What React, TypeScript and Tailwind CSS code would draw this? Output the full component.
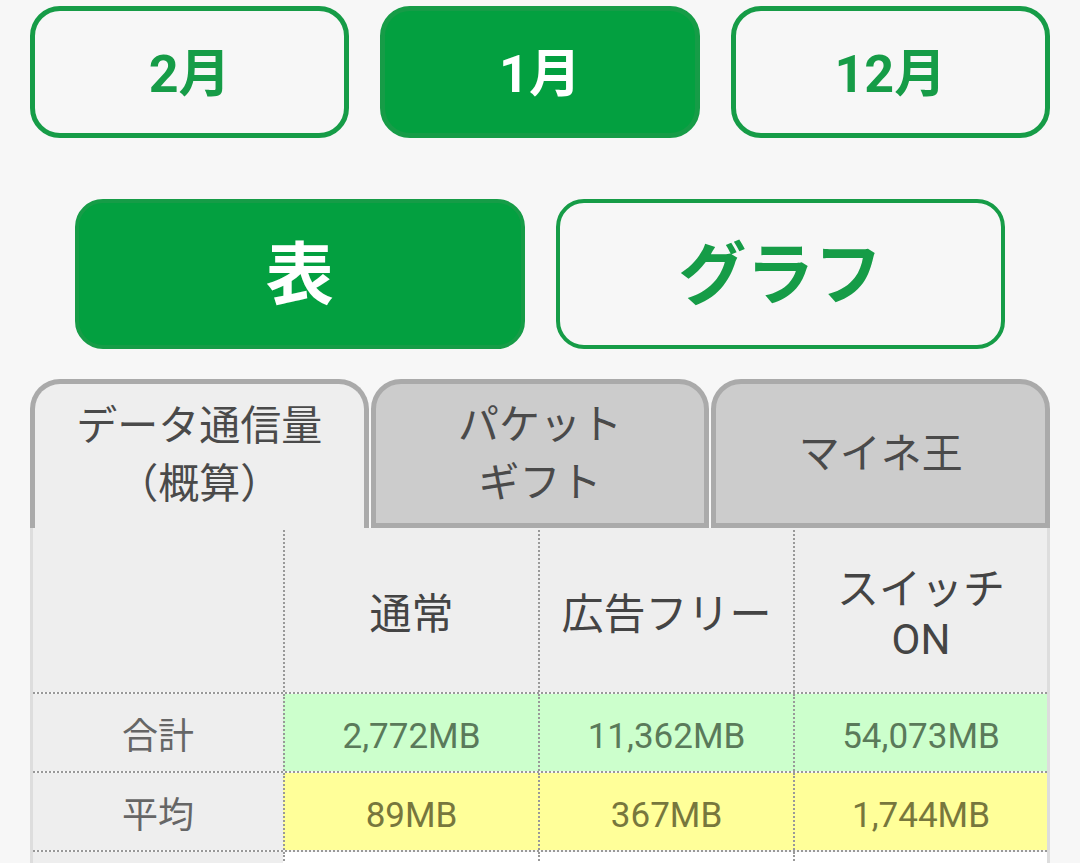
import React from "react";

const FONT = { fontFamily: 'Roboto, "Noto Sans CJK JP", sans-serif' };

const months = [
  { label: "2月", active: false },
  { label: "1月", active: true },
  { label: "12月", active: false },
];

const tabs = [
  { lines: ["データ通信量", "（概算）"], active: true },
  { lines: ["パケット", "ギフト"], active: false },
  { lines: ["マイネ王"], active: false },
];

const rows = [
  { label: "合計", values: ["2,772MB", "11,362MB", "54,073MB"], bg: "bg-[#ccffcc]", text: "text-[#5a7a5a]" },
  { label: "平均", values: ["89MB", "367MB", "1,744MB"], bg: "bg-[#ffff99]", text: "text-[#77773d]" },
];

export default function App() {
  return (
    <div className="min-h-screen overflow-hidden bg-[#f7f7f7] px-[30px] pt-[6px]" style={FONT}>
      {/* month selector */}
      <div className="flex gap-[31px]">
        {months.map((m) => (
          <button
            key={m.label}
            className={`flex h-[132px] flex-1 items-center justify-center rounded-[30px] border-[5px] border-[#169c47] pt-[6px] text-[52px] font-bold ${
              m.active ? "bg-[#03a040] text-white" : "bg-[#f7f7f7] text-[#169c47]"
            }`}
          >
            {m.label}
          </button>
        ))}
      </div>

      {/* table / graph toggle */}
      <div className="mt-[61px] flex gap-[31px] px-[45px]">
        <button className="flex h-[150px] flex-1 items-center justify-center rounded-[28px] border-[4px] border-[#169c47] bg-[#03a040] pt-[4px] text-[68px] font-bold text-white">
          表
        </button>
        <button className="flex h-[150px] flex-1 items-center justify-center rounded-[28px] border-[4px] border-[#169c47] bg-[#f7f7f7] pt-[4px] text-[68px] font-bold text-[#169c47]">
          グラフ
        </button>
      </div>

      {/* tabs */}
      <div className="mt-[30px] flex h-[149px] gap-[2px]">
        {tabs.map((t) => (
          <div
            key={t.lines[0]}
            className={`flex flex-1 flex-col items-center justify-center rounded-t-[30px] border-[5px] border-[#aaa] text-[41px] leading-[58px] text-[#4a4a4a] ${
              t.active ? "border-b-0 bg-[#eee] pb-[3px]" : "bg-[#ccc]"
            }`}
          >
            {t.lines.map((l) => (
              <span key={l}>{l}</span>
            ))}
          </div>
        ))}
      </div>

      {/* data table */}
      <div className="border-x-[3px] border-[#ddd]">
        <div className="grid h-[164px] grid-cols-[250px_255px_255px_1fr] bg-[#eee] pt-[2px] text-[42px] leading-[50px] text-[#444]">
          <div />
          <div className="flex items-center justify-center border-l-2 border-dotted border-[#999] pt-[8px]">通常</div>
          <div className="flex items-center justify-center border-l-2 border-dotted border-[#999] pt-[8px]">広告フリー</div>
          <div className="flex flex-col items-center justify-center border-l-2 border-dotted border-[#999] pt-[8px]">
            <span>スイッチ</span>
            <span>ON</span>
          </div>
        </div>
        {rows.map((r) => (
          <div
            key={r.label}
            className="grid h-[79px] grid-cols-[250px_255px_255px_1fr] border-t-2 border-dotted border-[#999]"
          >
            <div className="flex items-center justify-center bg-[#eee] pt-[8px] text-[36px] text-[#666]">{r.label}</div>
            {r.values.map((v) => (
              <div
                key={v}
                className={`flex items-center justify-center border-l-2 border-dotted border-[#999] pt-[10px] text-[35px] ${r.bg} ${r.text}`}
              >
                {v}
              </div>
            ))}
          </div>
        ))}
        <div className="grid h-[79px] grid-cols-[250px_255px_255px_1fr] border-t-2 border-dotted border-[#999]">
          <div className="bg-[#eee]" />
          <div className="border-l-2 border-dotted border-[#999] bg-white" />
          <div className="border-l-2 border-dotted border-[#999] bg-white" />
          <div className="border-l-2 border-dotted border-[#999] bg-white" />
        </div>
      </div>
    </div>
  );
}
